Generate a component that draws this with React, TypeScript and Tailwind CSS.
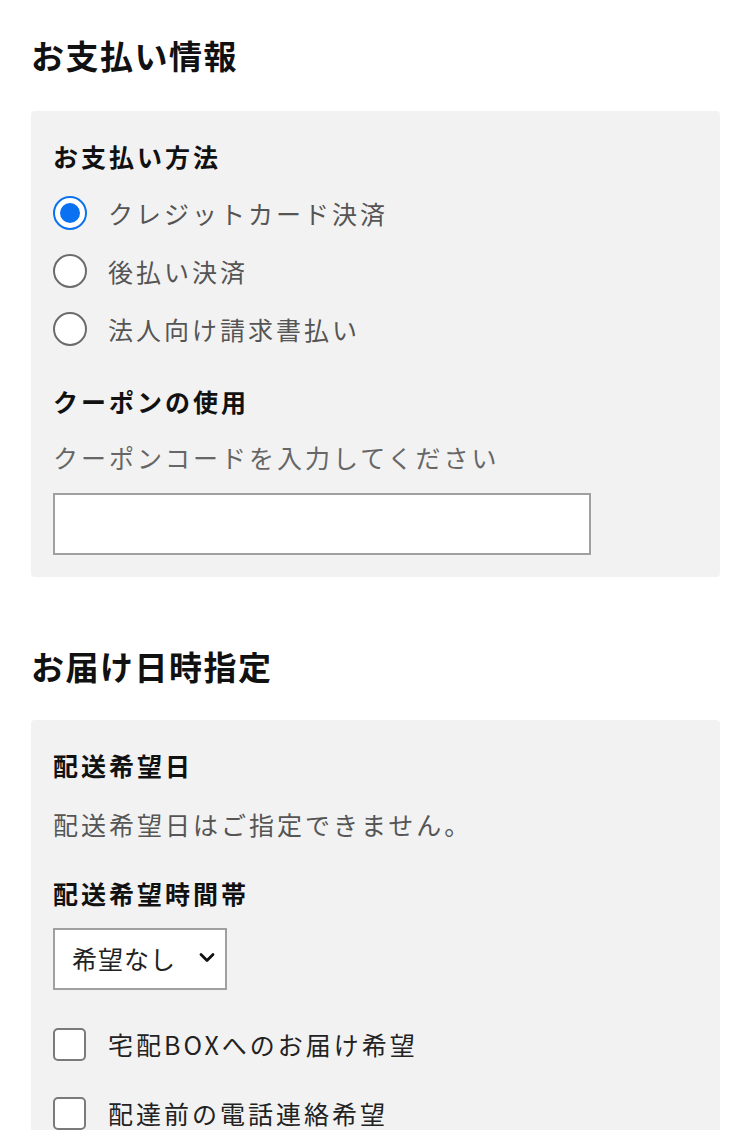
import React, { useState } from 'react';

const font = { fontFamily: '"Noto Sans CJK JP", "Noto Sans", sans-serif' };

function Radio({ checked, label, onClick }: { checked: boolean; label: string; onClick: () => void }) {
  return (
    <label className="flex h-[58px] items-center cursor-pointer" onClick={onClick}>
      {checked ? (
        <span className="flex h-[34px] w-[34px] items-center justify-center rounded-full border-[2.5px] border-[#0a72f0] bg-white">
          <span className="h-[20px] w-[20px] rounded-full bg-[#0a72f0]" />
        </span>
      ) : (
        <span className="h-[34px] w-[34px] rounded-full border-2 border-[#6b6b6b] bg-white" />
      )}
      <span className="ml-[21px] text-[25px] leading-[32px] tracking-[3px] text-[#555]">{label}</span>
    </label>
  );
}

function Check({ label, className }: { label: string; className?: string }) {
  const [on, setOn] = useState(false);
  return (
    <label className={`flex h-[40px] items-center cursor-pointer ${className ?? ''}`} onClick={() => setOn(!on)}>
      <span className="flex h-[33px] w-[33px] items-center justify-center rounded-[5px] border-2 border-[#7a7a7a] bg-white">
        {on && <span className="h-[14px] w-[14px] bg-[#0a72f0]" />}
      </span>
      <span className="ml-[22px] text-[25px] leading-[32px] tracking-[3px] text-[#222]">{label}</span>
    </label>
  );
}

export default function App() {
  const [method, setMethod] = useState(0);
  const methods = ['クレジットカード決済', '後払い決済', '法人向け請求書払い'];

  return (
    <main className="min-h-[1130px] bg-white px-[31px] pt-[35px]" style={font}>
      <h2 className="text-[33px] font-bold leading-[40px] tracking-[1.5px] text-[#111]">お支払い情報</h2>
      <section className="mt-[36px] w-[689px] rounded-[4px] bg-[#f2f2f2] px-[22px] pt-[29px] pb-[22px]">
        <h3 className="text-[25px] font-bold leading-[32px] tracking-[3px] text-[#111]">お支払い方法</h3>
        <div className="mt-[12px]">
          {methods.map((m, i) => (
            <Radio key={m} label={m} checked={method === i} onClick={() => setMethod(i)} />
          ))}
        </div>
        <h3 className="mt-[27px] text-[25px] font-bold leading-[32px] tracking-[3px] text-[#111]">クーポンの使用</h3>
        <p className="mt-[24px] text-[25px] leading-[32px] tracking-[3px] text-[#666]">クーポンコードを入力してください</p>
        <input
          type="text"
          className="mt-[20px] block h-[62px] w-[538px] border-2 border-[#a0a0a0] bg-white px-3 text-[24px] outline-none"
        />
      </section>

      <h2 className="mt-[69px] text-[33px] font-bold leading-[40px] tracking-[1.5px] text-[#111]">お届け日時指定</h2>
      <section className="mt-[34px] w-[689px] rounded-[4px] bg-[#f2f2f2] px-[22px] pt-[29px] pb-[40px]">
        <h3 className="text-[25px] font-bold leading-[32px] tracking-[3px] text-[#111]">配送希望日</h3>
        <p className="mt-[27px] text-[25px] leading-[32px] tracking-[3px] text-[#555]">配送希望日はご指定できません。</p>
        <h3 className="mt-[37px] text-[25px] font-bold leading-[32px] tracking-[3px] text-[#111]">配送希望時間帯</h3>
        <div className="relative mt-[19px] h-[62px] w-[174px]">
          <select className="h-full w-full appearance-none border-2 border-[#a0a0a0] bg-white pl-[17px] text-[25px] tracking-[1px] text-[#222] outline-none">
            <option>希望なし</option>
          </select>
          <svg
            className="pointer-events-none absolute right-[12px] top-[24px]"
            width="16"
            height="11"
            viewBox="0 0 16 11"
            fill="none"
            stroke="#111"
            strokeWidth="2.8"
            strokeLinecap="round"
            strokeLinejoin="round"
          >
            <path d="M2 2.5l6 6 6-6" />
          </svg>
        </div>
        <Check className="mt-[34px]" label="宅配BOXへのお届け希望" />
        <Check className="mt-[29px]" label="配達前の電話連絡希望" />
      </section>
    </main>
  );
}
